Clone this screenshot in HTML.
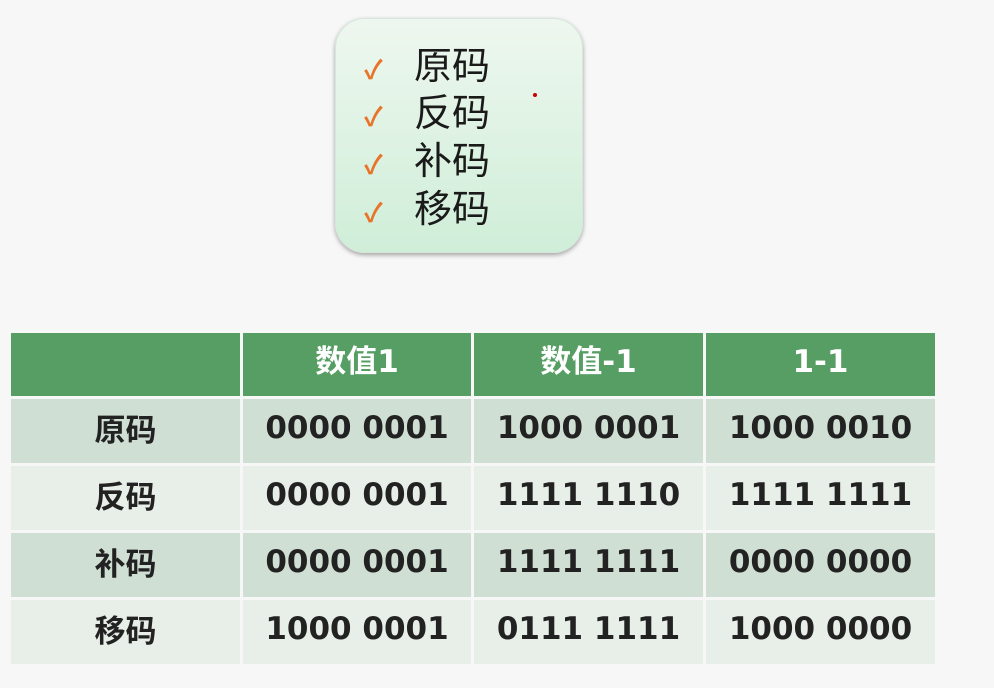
<html><head><style>
body{margin:0;width:994px;height:688px;background:#f7f7f7;position:relative;overflow:hidden;font-family:"Liberation Sans","Noto Sans CJK SC",sans-serif}
.box{position:absolute;left:335px;top:18px;width:246px;height:233px;border-radius:30px;background:linear-gradient(#eef7ef,#cfeed8);box-shadow:0 2px 5px rgba(0,0,0,.35);border:1px solid #d6e6da}
.it{position:absolute;left:28px;font-size:38px;color:#1a1a1a;font-family:"Noto Sans CJK SC",sans-serif;font-weight:400;line-height:40px}
.it span{color:#e8742a;font-size:26px;margin-right:26px;font-weight:700;display:inline-block;width:24px}
.dot{position:absolute;left:197px;top:74px;width:4px;height:4px;border-radius:2px;background:#c00}
table{position:absolute;left:11px;top:333px;border-collapse:separate;border-spacing:3px 3px;margin:-3px}
td{text-align:center;font-weight:700;font-size:31px;color:#222;padding:0 0 6px 0;font-family:"DejaVu Sans","Noto Sans CJK SC",sans-serif;line-height:34px;vertical-align:middle}
td.c{font-family:"Noto Sans CJK SC",sans-serif;font-size:31px}
tr.h td{background:#569e63;color:#fff;height:63px}
tr.a td{background:#cfdfd3;height:64px}
tr.b td{background:#e8efe9;height:64px}
</style></head><body>
<div class="box">
<div class="it" style="top:24px"><span>✓</span>原码</div>
<div class="it" style="top:71px"><span>✓</span>反码</div>
<div class="it" style="top:119px"><span>✓</span>补码</div>
<div class="it" style="top:167px"><span>✓</span>移码</div>
<div class="dot"></div>
</div>
<table>
<tr class="h"><td style="width:229px"></td><td style="width:228px">数值1</td><td style="width:229px">数值-1</td><td style="width:229px">1-1</td></tr>
<tr class="a"><td class="c">原码</td><td>0000 0001</td><td>1000 0001</td><td>1000 0010</td></tr>
<tr class="b"><td class="c">反码</td><td>0000 0001</td><td>1111 1110</td><td>1111 1111</td></tr>
<tr class="a"><td class="c">补码</td><td>0000 0001</td><td>1111 1111</td><td>0000 0000</td></tr>
<tr class="b"><td class="c">移码</td><td>1000 0001</td><td>0111 1111</td><td>1000 0000</td></tr>
</table>
</body></html>
